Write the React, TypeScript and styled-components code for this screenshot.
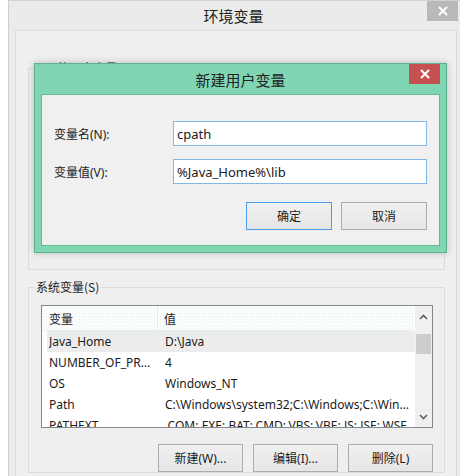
import React from 'react';
import styled, { createGlobalStyle } from 'styled-components';

const GlobalStyle = createGlobalStyle`
  html, body {
    margin: 0;
    padding: 0;
    background: #ffffff;
    width: 460px;
    height: 476px;
    overflow: hidden;
  }
  body {
    font-family: "Noto Sans", "Noto Sans CJK SC", sans-serif;
    font-size: 12px;
    color: #1b1b1b;
  }
`;

const Window = styled.div`
  position: relative;
  margin-left: 8px;
  width: 451px;
  height: 475px;
  border-left: 1px solid #cdcdcd;
  border-top: 1px solid #d2d2d2;
  background: #ebebeb;
  overflow: hidden;
  display: flex;
  flex-direction: column;
`;

const TitleBar = styled.div<{ $height: number; $bg: string }>`
  display: flex;
  align-items: flex-start;
  height: ${(p) => p.$height}px;
  background: ${(p) => p.$bg};
  flex-shrink: 0;
`;

const Title = styled.div<{ $top: number }>`
  flex: 1;
  text-align: center;
  padding-left: 31px;
  padding-top: ${(p) => p.$top}px;
  font-family: "Noto Sans CJK SC", sans-serif;
  font-size: 15px;
  line-height: 20px;
  color: #222;
`;

const CloseButton = styled.div<{ $bg: string; $right: number }>`
  width: 31px;
  height: 20px;
  margin-right: ${(p) => p.$right}px;
  background: ${(p) => p.$bg};
  display: flex;
  align-items: center;
  justify-content: center;
`;

const Panel = styled.div`
  flex: 1;
  margin: 0 3px 0 6px;
  background: #efefef;
  border: 1px solid #dadada;
  border-bottom: none;
  padding: 29px 11px 0 12px;
  display: flex;
  flex-direction: column;
  gap: 9px;
`;

const Group = styled.fieldset`
  margin: 0;
  padding: 0;
  border: 1px solid #dcdcdc;
  min-width: 0;
`;

const Legend = styled.legend`
  margin-left: 5px;
  padding: 0 2px;
  font-family: "Noto Sans CJK SC", sans-serif;
  font-size: 12px;
  line-height: 16px;
  color: #1b1b1b;
`;

const GroupBody = styled.div<{ $height?: number }>`
  padding: 10px 11px 0 12px;
  ${(p) => (p.$height ? `height: ${p.$height}px;` : '')}
  box-sizing: border-box;
`;

const List = styled.div`
  height: 123px;
  border: 1px solid #828790;
  background: #ffffff;
  display: flex;
  box-sizing: border-box;
`;

const ListMain = styled.div`
  flex: 1;
  min-width: 0;
  overflow: hidden;
`;

const HeaderRow = styled.div`
  display: grid;
  grid-template-columns: 116px minmax(0, 1fr);
  height: 24px;
  margin-right: 1px;
  border-bottom: 1px solid #e3edf4;
  background-color: #fbfdfd;
  background-image: radial-gradient(#e6eff2 0.6px, transparent 0.8px);
  background-size: 3px 3px;
`;

const HeaderCell = styled.div<{ $divider?: boolean }>`
  padding-left: ${(p) => (p.$divider ? 6 : 7)}px;
  border-right: ${(p) => (p.$divider ? 'none' : '1px solid #e3edf4')};
  display: flex;
  align-items: center;
  font-family: "Noto Sans CJK SC", sans-serif;
`;

const Row = styled.div<{ $selected?: boolean }>`
  display: grid;
  grid-template-columns: 116px minmax(0, 1fr);
  height: 21px;
  margin-left: 5px;
  padding-left: 2px;
  align-items: center;
  background: ${(p) => (p.$selected ? '#ececec' : 'transparent')};
  white-space: nowrap;
`;

const Cell = styled.div<{ $pad: number }>`
  overflow: hidden;
  text-overflow: ellipsis;
  white-space: nowrap;
  padding-right: ${(p) => p.$pad}px;
`;

const ScrollBar = styled.div`
  width: 17px;
  flex-shrink: 0;
  background: #f0f0f0;
  display: flex;
  flex-direction: column;
`;

const ScrollArrow = styled.div<{ $height: number }>`
  height: ${(p) => p.$height}px;
  display: flex;
  align-items: center;
  justify-content: center;
`;

const ScrollTrack = styled.div`
  flex: 1;
  padding: 0 1px;
`;

const Thumb = styled.div`
  height: 20px;
  background: #cdcdcd;
`;

const ButtonRow = styled.div<{ $gap: number; $top: number }>`
  display: flex;
  justify-content: flex-end;
  gap: ${(p) => p.$gap}px;
  margin-top: ${(p) => p.$top}px;
`;

const Button = styled.div<{ $primary?: boolean; $width: number }>`
  width: ${(p) => p.$width}px;
  height: 28px;
  box-sizing: border-box;
  border: 1px solid ${(p) => (p.$primary ? '#4d9ae8' : '#acacac')};
  background: linear-gradient(#f0f0f0, #e6e6e6);
  display: flex;
  align-items: center;
  justify-content: center;
  font-family: "Noto Sans", "Noto Sans CJK SC", sans-serif;
  font-size: 12px;
  color: #1b1b1b;
`;

const Dialog = styled.div`
  position: absolute;
  left: 25px;
  top: 62px;
  width: 413px;
  height: 190px;
  box-sizing: border-box;
  background: #80d6b2;
  border: 1px solid #5fb08e;
  box-shadow: 0 0 7px rgba(0, 0, 0, 0.22);
  display: flex;
  flex-direction: column;
  padding: 0 6px 6px 6px;
`;

const DialogBody = styled.div`
  flex: 1;
  background: #f0f0f0;
  border: 1px solid #68b892;
  padding: 26px 12px 0 12px;
`;

const FormGrid = styled.div`
  display: grid;
  grid-template-columns: 119px 254px;
  row-gap: 13px;
  align-items: center;
`;

const Label = styled.div`
  font-family: "Noto Sans", "Noto Sans CJK SC", sans-serif;
`;

const Input = styled.div`
  height: 25px;
  box-sizing: border-box;
  border: 1px solid #84b6ea;
  background: #ffffff;
  padding-left: 3px;
  display: flex;
  align-items: center;
  font-size: 13px;
`;

const CloseIcon = () => (
  <svg width="10" height="10" viewBox="0 0 10 10">
    <path d="M1 1 L9 9 M9 1 L1 9" stroke="#ffffff" strokeWidth="2" />
  </svg>
);

const Chevron = ({ up }: { up?: boolean }) => (
  <svg width="9" height="6" viewBox="0 0 9 6">
    <path
      d={up ? 'M1 5 L4.5 1.5 L8 5' : 'M1 1 L4.5 4.5 L8 1'}
      stroke="#606060"
      strokeWidth="1.6"
      fill="none"
    />
  </svg>
);

const rows = [
  { name: 'Java_Home', value: 'D:\\Java', selected: true },
  { name: 'NUMBER_OF_PROCESSORS', value: '4' },
  { name: 'OS', value: 'Windows_NT' },
  { name: 'Path', value: 'C:\\Windows\\system32;C:\\Windows;C:\\Windows\\System32\\Wbem' },
  { name: 'PATHEXT', value: '.COM;.EXE;.BAT;.CMD;.VBS;.VBE;.JS;.JSE;.WSF' },
];

const App: React.FC = () => {
  return (
    <>
      <GlobalStyle />
      <Window>
        <TitleBar $height={29} $bg="#ebebeb">
          <Title $top={5}>环境变量</Title>
          <CloseButton $bg="#b9b9b9" $right={2}>
            <CloseIcon />
          </CloseButton>
        </TitleBar>
        <Panel>
          <Group>
            <Legend>lsw 的用户变量(U)</Legend>
            <GroupBody $height={193} />
          </Group>
          <Group>
            <Legend>系统变量(S)</Legend>
            <GroupBody>
              <List>
                <ListMain>
                  <HeaderRow>
                    <HeaderCell>变量</HeaderCell>
                    <HeaderCell $divider>值</HeaderCell>
                  </HeaderRow>
                  {rows.map((r) => (
                    <Row key={r.name} $selected={r.selected}>
                      <Cell $pad={10}>{r.name}</Cell>
                      <Cell $pad={4}>{r.value}</Cell>
                    </Row>
                  ))}
                </ListMain>
                <ScrollBar>
                  <ScrollArrow $height={21}>
                    <Chevron up />
                  </ScrollArrow>
                  <ScrollTrack>
                    <Thumb style={{ marginTop: 7 }} />
                  </ScrollTrack>
                  <ScrollArrow $height={20}>
                    <Chevron />
                  </ScrollArrow>
                </ScrollBar>
              </List>
              <ButtonRow $gap={10} $top={16}>
                <Button $width={85}>新建(W)...</Button>
                <Button $width={85}>编辑(I)...</Button>
                <Button $width={85}>删除(L)</Button>
              </ButtonRow>
            </GroupBody>
          </Group>
        </Panel>
        <Dialog>
          <TitleBar $height={30} $bg="transparent">
            <Title $top={6}>新建用户变量</Title>
            <CloseButton $bg="#c75050" $right={0}>
              <CloseIcon />
            </CloseButton>
          </TitleBar>
          <DialogBody>
            <FormGrid>
              <Label>变量名(N):</Label>
              <Input>cpath</Input>
              <Label>变量值(V):</Label>
              <Input>%Java_Home%\lib</Input>
            </FormGrid>
            <ButtonRow $gap={9} $top={18}>
              <Button $primary $width={86}>确定</Button>
              <Button $width={86}>取消</Button>
            </ButtonRow>
          </DialogBody>
        </Dialog>
      </Window>
    </>
  );
};

export default App;
